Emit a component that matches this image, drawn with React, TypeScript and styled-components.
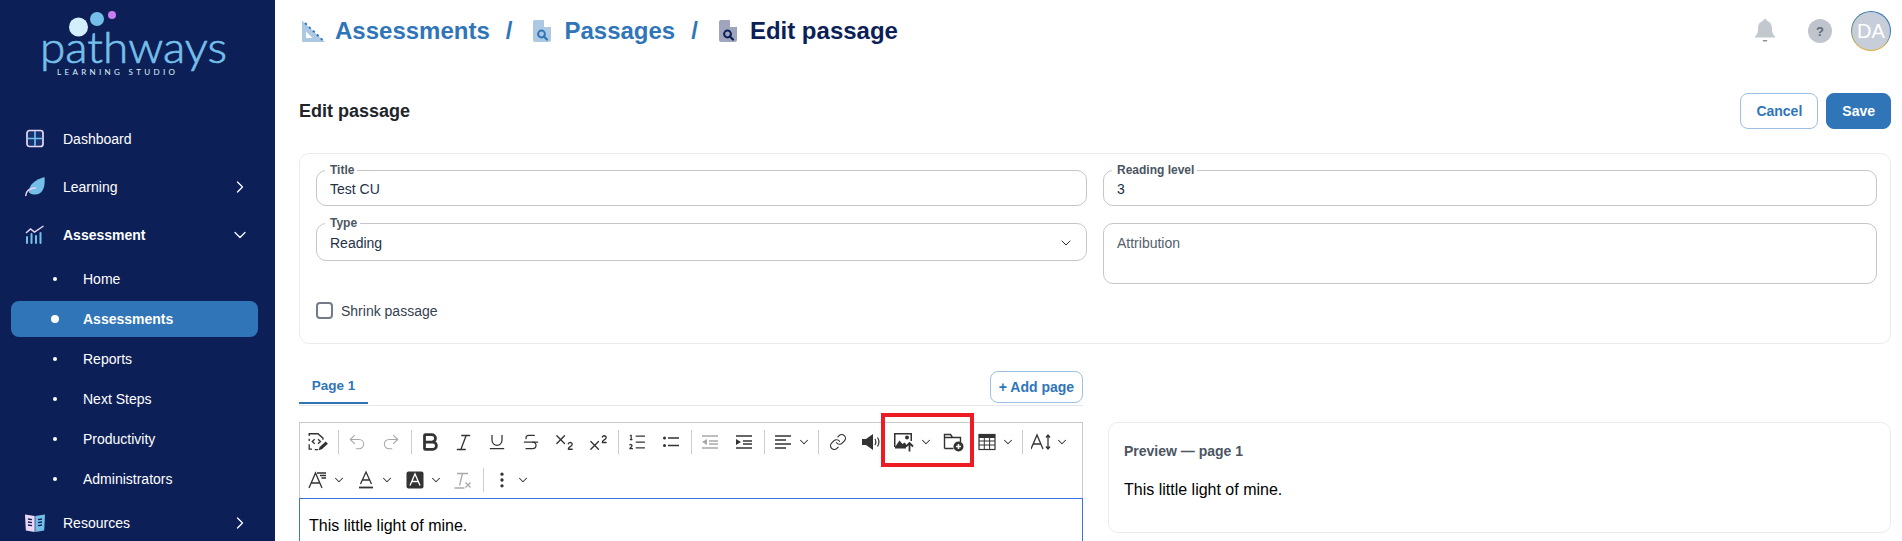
import React from "react";
import styled, { createGlobalStyle } from "styled-components";
import {
  Bold,
  ChevronDown,
  ChevronRight,
  EllipsisVertical,
  Italic,
  Link as LinkIcon,
  ListOrdered,
  Redo2,
  Strikethrough,
  Subscript,
  Superscript,
  Underline,
  Undo2,
} from "lucide-react";

const BLUE = "#2f75b8";
const NAVY = "#0d1f57";

const GlobalStyle = createGlobalStyle`
  html, body {
    margin: 0;
    height: 100%;
    overflow: hidden;
    background: #fff;
    font-family: "Liberation Sans", Arial, sans-serif;
  }
  * { box-sizing: border-box; }
`;

const Shell = styled.div`
  display: flex;
  height: 100vh;
  overflow: hidden;
`;

const Sidebar = styled.aside`
  width: 275px;
  flex: none;
  background: ${NAVY};
  color: #fff;
  font-size: 14px;
`;

const LogoBox = styled.div`
  height: 115px;
  svg { display: block; }
`;

const NavRow = styled.div<{ $bold?: boolean }>`
  height: 48px;
  display: flex;
  align-items: center;
  gap: 18px;
  padding: 0 25px;
  font-weight: ${(p) => (p.$bold ? 700 : 400)};
  svg.caret { margin-left: auto; }
`;

const SubList = styled.div`
  display: flex;
  flex-direction: column;
  gap: 4px;
  margin: 2px 0;
`;

const SubItem = styled.div<{ $active?: boolean }>`
  height: 36px;
  margin: 0 17px 0 11px;
  padding-left: 40px;
  display: flex;
  align-items: center;
  gap: 24px;
  border-radius: 8px;
  background: ${(p) => (p.$active ? BLUE : "transparent")};
  font-weight: ${(p) => (p.$active ? 700 : 400)};
`;

const DotBox = styled.span`
  width: 8px;
  display: flex;
  justify-content: center;
`;

const Dot = styled.span<{ $active?: boolean }>`
  width: ${(p) => (p.$active ? 8 : 4)}px;
  height: ${(p) => (p.$active ? 8 : 4)}px;
  border-radius: 50%;
  background: #fff;
`;

const Main = styled.main`
  flex: 1;
  min-width: 0;
  padding: 0 11px 0 24px;
`;

const Header = styled.header`
  height: 62px;
  display: flex;
  align-items: center;
  justify-content: space-between;
`;

const Crumbs = styled.nav`
  display: flex;
  align-items: center;
  padding-left: 2px;
  font-size: 24px;
  font-weight: 700;
  color: ${BLUE};
`;

const Crumb = styled.span<{ $current?: boolean }>`
  display: flex;
  align-items: center;
  gap: 10px;
  color: ${(p) => (p.$current ? NAVY : BLUE)};
`;

const Slash = styled.span`
  margin: 0 18px 0 16px;
`;

const HeaderTools = styled.div`
  display: flex;
  align-items: center;
`;

const BellSlot = styled.span`
  display: flex;
  margin-right: 32px;
`;

const HelpDot = styled.span`
  width: 24px;
  height: 24px;
  border-radius: 50%;
  background: #c0c5cd;
  color: #5f6878;
  font-size: 13px;
  font-weight: 700;
  display: flex;
  align-items: center;
  justify-content: center;
  margin-right: 19px;
`;

const Avatar = styled.span`
  width: 40px;
  height: 40px;
  border-radius: 50%;
  padding: 1px;
  background: conic-gradient(#2f75b8 0 25%, #e0b24a 40% 60%, #6a9a7a 75%, #2f75b8 100%);
  display: flex;
`;

const AvatarFace = styled.span`
  flex: 1;
  border-radius: 50%;
  background: #c8ced9;
  color: #fff;
  font-size: 20px;
  display: flex;
  align-items: center;
  justify-content: center;
`;

const TitleRow = styled.div`
  margin-top: 31px;
  display: flex;
  align-items: center;
  justify-content: space-between;
`;

const PageTitle = styled.h1`
  margin: 0;
  font-size: 18px;
  font-weight: 700;
  color: #212529;
`;

const Actions = styled.div`
  display: flex;
  gap: 8px;
`;

const Button = styled.button<{ $primary?: boolean }>`
  height: 36px;
  padding: 0 15px;
  border-radius: 8px;
  border: 1px solid ${(p) => (p.$primary ? BLUE : "#9cc0e3")};
  background: ${(p) => (p.$primary ? BLUE : "#fff")};
  color: ${(p) => (p.$primary ? "#fff" : BLUE)};
  font: 700 14px "Liberation Sans", Arial, sans-serif;
`;

const Card = styled.section`
  margin-top: 24px;
  border: 1px solid #e9ecef;
  border-radius: 10px;
  padding: 9px 13px 24px 16px;
`;

const FormGrid = styled.div`
  display: grid;
  grid-template-columns: 771px 1fr;
  column-gap: 16px;
`;

const FieldStack = styled.div`
  display: flex;
  flex-direction: column;
  gap: 10px;
`;

const Field = styled.fieldset<{ $height: number }>`
  margin: 0;
  padding: 0 13px;
  min-width: 0;
  height: ${(p) => p.$height}px;
  border: 1px solid #c4c6c9;
  border-radius: 10px;
  font-size: 14px;
  color: #243047;
`;

const FieldLegend = styled.legend`
  margin-left: -5px;
  padding: 0 3px 0 5px;
  font-size: 12px;
  line-height: 14px;
  font-weight: 700;
  color: #4b5563;
`;

const FieldValue = styled.div<{ $line: number }>`
  display: flex;
  align-items: center;
  justify-content: space-between;
  height: ${(p) => p.$line}px;
  svg { margin-right: -1px; }
`;

const AreaField = styled.div`
  margin-top: 7px;
  height: 61px;
  border: 1px solid #c4c6c9;
  border-radius: 10px;
  padding: 11px 13px;
  font-size: 14px;
  color: #555d6b;
`;

const CheckRow = styled.label`
  margin-top: 18px;
  display: flex;
  align-items: center;
  gap: 8px;
  font-size: 14px;
  color: #374151;
`;

const CheckBox = styled.span`
  width: 17px;
  height: 17px;
  border: 2px solid #747b88;
  border-radius: 4px;
`;

const LowerGrid = styled.div`
  margin-top: 27px;
  display: grid;
  grid-template-columns: 784px 1fr;
  column-gap: 25px;
`;

const TabRow = styled.div`
  display: flex;
  justify-content: space-between;
  align-items: flex-end;
  height: 35px;
  padding-bottom: 2px;
  border-bottom: 1px solid #e5e7eb;
`;

const Tab = styled.div`
  width: 69px;
  height: 31px;
  margin-bottom: -1px;
  border-bottom: 2px solid ${BLUE};
  color: ${BLUE};
  font-size: 13.5px;
  font-weight: 700;
  text-align: center;
  line-height: 25px;
`;

const AddPage = styled.button`
  height: 32px;
  width: 93px;
  padding: 0;
  border: 1px solid #9cc0e3;
  border-radius: 8px;
  background: #fff;
  color: ${BLUE};
  font: 700 14px "Liberation Sans", Arial, sans-serif;
`;

const Editor = styled.div`
  position: relative;
  margin-top: 16px;
  border: 1px solid #c9c9c9;
  border-bottom: 0;
  height: 140px;
`;

const Toolbar = styled.div`
  padding: 2px 0 1px 1px;
  display: flex;
  flex-direction: column;
  gap: 4px;
`;

const ToolRow = styled.div`
  display: flex;
  align-items: center;
  height: 34px;
`;

const ToolButton = styled.span<{ $off?: boolean }>`
  width: 33.6px;
  height: 34px;
  flex: none;
  display: flex;
  align-items: center;
  justify-content: center;
  color: ${(p) => (p.$off ? "#a9a9a9" : "#333")};
`;

const SplitButton = styled.span<{ $off?: boolean }>`
  width: 48.5px;
  height: 34px;
  flex: none;
  display: flex;
  align-items: center;
  padding-left: 6.5px;
  gap: 4px;
  color: ${(p) => (p.$off ? "#a9a9a9" : "#333")};
`;

const ToolSep = styled.span`
  width: 1px;
  height: 24px;
  flex: none;
  margin: 0 1.75px 0 3px;
  background: #ccc;
`;

const RedMark = styled.div`
  position: absolute;
  left: 581px;
  top: -10px;
  width: 93px;
  height: 54px;
  border: 4px solid #ed1c24;
  pointer-events: none;
`;

const EditArea = styled.div`
  height: 100%;
  margin: 0 -1px;
  border: 1px solid #3d73e0;
  padding: 17px 9px;
  font-size: 16px;
  line-height: 20px;
  color: #000;
`;

const PreviewColumn = styled.div`
  padding-top: 51px;
`;

const Preview = styled.section`
  height: 111px;
  border: 1px solid #e9ecef;
  border-radius: 10px;
  padding: 20px 15px;
`;

const PreviewLabel = styled.div`
  font-size: 14px;
  line-height: 16px;
  font-weight: 700;
  color: #4b5563;
`;

const PreviewText = styled.div`
  margin-top: 21px;
  font-size: 16px;
  line-height: 20px;
  color: #000;
`;

const PINK = "#ead6f5";
const SKY = "#74bfe9";

const Logo = () => (
  <svg width="275" height="115" viewBox="0 0 275 115">
    <circle cx="78.5" cy="27" r="9.5" fill="#d4effc" />
    <circle cx="97" cy="19" r="7" fill={SKY} />
    <circle cx="112" cy="15" r="4" fill="#c77df0" />
    <text
      x="40"
      y="63"
      textLength="187"
      lengthAdjust="spacingAndGlyphs"
      fontFamily="Lato, sans-serif"
      fontWeight="300"
      fontSize="43"
      fill={SKY}
      stroke={SKY}
      strokeWidth=".7"
    >
      pathways
    </text>
    <text
      x="57"
      y="75"
      textLength="118"
      fontFamily="Lato, sans-serif"
      fontSize="8"
      fill="#dff3fd"
    >
      LEARNING STUDIO
    </text>
  </svg>
);

const DashboardIcon = () => (
  <svg width="20" height="20" viewBox="0 0 20 20">
    <rect x="2" y="1.500" width="16" height="16" rx="2.500" fill="#17336f" stroke={PINK} strokeWidth="1.700" />
    <path d="M10 2v15M2.500 9.500h15" stroke={SKY} strokeWidth="1.700" />
  </svg>
);

const LeafIcon = () => (
  <svg width="20" height="20" viewBox="0 0 20 20">
    <path d="M19.500 0c1 9.500-1.500 17.500-9.500 17.500-2.500 0-4.500-.5-6-2C3.500 8.500 9 3 19.500 0z" fill={SKY} />
    <path d="M0.800 18.500C1.500 13 5 11 10.500 11" fill="none" stroke={PINK} strokeWidth="1.500" strokeLinecap="round" />
  </svg>
);

const ChartIcon = () => (
  <svg width="20" height="20" viewBox="0 0 20 20">
    <path d="M1 8l4.500-4 4 3L18.500 1" fill="none" stroke={PINK} strokeWidth="1.500" />
    <path d="M2 12v6M6.500 9v9M11 11v7M15.500 8v10" stroke={SKY} strokeWidth="2" strokeLinecap="round" />
  </svg>
);

const BookIcon = () => (
  <svg width="20" height="20" viewBox="0 0 20 20">
    <path d="M0 1.500l9.700 1.500v16L0.800 17.500z" fill={PINK} />
    <path d="M20 1.500L10.300 3v16l8.900-1.500z" fill={SKY} />
    <path d="M3 6l4 .7M3 9l4 .7M3 12l4 .7M13 6.700l4-.7M13 9.700l4-.7M13 12.700l4-.7" stroke={NAVY} strokeWidth="1.300" />
  </svg>
);

const RulerIcon = ({ color }: { color: string }) => (
  <svg width="24" height="24" viewBox="0 0 24 24">
    <path d="M1 1.500L24 23H2a1 1 0 0 1-1-1z" fill={color} opacity=".4" />
    <path d="M4 4l17.500 17" stroke={color} strokeWidth="1.800" strokeDasharray="2.500 3" />
    <path d="M5 12.500L11.500 19H5z" fill="#fff" />
  </svg>
);

const FileSearchIcon = ({ color }: { color: string }) => (
  <svg width="24" height="24" viewBox="0 0 24 24">
    <path d="M4.500 1h9L21 8v13a2 2 0 0 1-2 2H5a2 2 0 0 1-2-2V3a2 2 0 0 1 1.500-2z" fill={color} opacity=".4" />
    <path d="M14 .8L21.200 8H14z" fill="#fff" />
    <circle cx="11.500" cy="15" r="3.400" fill="none" stroke={color} strokeWidth="2" />
    <path d="M14 17.500l3 3" stroke={color} strokeWidth="2.200" strokeLinecap="round" />
  </svg>
);

const BellIcon = () => (
  <svg width="22" height="26" viewBox="0 0 22 26">
    <path d="M11 1a2 2 0 0 1 2 2c4 1 5 4.500 5 8 0 4 1 5.500 3 7.500v1H1v-1c2-2 3-3.500 3-7.500 0-3.500 1-7 5-8a2 2 0 0 1 2-2z" fill="#c3c8cf" />
    <path d="M8.500 22h5l-1 1.500h-3z" fill="#8a909a" />
  </svg>
);

const SourceIcon = () => (
  <svg width="22" height="22" viewBox="0 0 20 20" fill="none" stroke="currentColor" strokeWidth="1.200">
    <path d="M2 4.500V2.500h8l4.500 4v1.500M2 7v2M2 12v4.500h2.500M7 17h3" />
    <path d="M7 7.500L4.800 9.500 7 11.500M10 7.500l2.200 2-2.200 2" />
    <path d="M10.500 17.500l1-3 5.500-5 2 2-5.500 5z" fill="currentColor" stroke="none" />
  </svg>
);

const BulletsIcon = () => (
  <svg width="20" height="20" viewBox="0 0 20 20" fill="currentColor">
    <circle cx="3.500" cy="6" r="1.500" />
    <circle cx="3.500" cy="13.500" r="1.500" />
    <path d="M7 5.300h11v1.400H7zM7 12.800h11v1.400H7z" />
  </svg>
);

const OutdentIcon = () => (
  <svg width="20" height="20" viewBox="0 0 20 20" fill="currentColor">
    <path d="M2 3.300h16v1.400H2zM9 8.300h9v1.400H9zM9 11.300h9v1.400H9zM2 15.300h16v1.400H2zM7 7v6l-5-3z" />
  </svg>
);

const IndentIcon = () => (
  <svg width="20" height="20" viewBox="0 0 20 20" fill="currentColor">
    <path d="M2 3.300h16v1.400H2zM9 8.300h9v1.400H9zM9 11.300h9v1.400H9zM2 15.300h16v1.400H2zM2 7v6l5-3z" />
  </svg>
);

const AlignIcon = () => (
  <svg width="20" height="20" viewBox="0 0 20 20" fill="currentColor">
    <path d="M2 3.300h16v1.400H2zM2 7.300h11v1.400H2zM2 11.300h16v1.400H2zM2 15.300h11v1.400H2z" />
  </svg>
);

const SpeakerIcon = () => (
  <svg width="20" height="20" viewBox="0 0 20 20" fill="currentColor">
    <path d="M1 7h4l7-5v16l-7-5H1z" />
    <path d="M14 7c1 1.800 1 4.200 0 6M16.500 5.500c1.800 2.800 1.800 6.200 0 9" fill="none" stroke="currentColor" strokeWidth="1.200" />
  </svg>
);

const ImageUploadIcon = () => (
  <svg width="21" height="20" viewBox="0 0 21 20" fill="currentColor">
    <path d="M0 1h18v8h-1.500V2.500h-15V15H0z" />
    <circle cx="13" cy="5.500" r="2" />
    <path d="M1 15l4.500-6.500 3 3.500 2-1.500 1.500 1.500V16.500H1z" />
    <path d="M15.500 19.500v-8M12 14.500l3.500-3.500 3.500 3.500" fill="none" stroke="currentColor" strokeWidth="1.800" />
  </svg>
);

const FolderPlusIcon = () => (
  <svg width="21" height="20" viewBox="0 0 21 20">
    <path d="M1.500 16.500V2.500h6l2 3H17.500v5M1.500 5.500h8M1.500 16.500h9" fill="none" stroke="currentColor" strokeWidth="1.400" />
    <circle cx="15.500" cy="14.500" r="5" fill="currentColor" />
    <path d="M15.500 12v5M13 14.500h5" stroke="#fff" strokeWidth="1.500" />
  </svg>
);

const TableIcon = () => (
  <svg width="20" height="20" viewBox="0 0 20 20" fill="none" stroke="currentColor">
    <rect x="2" y="2.500" width="16" height="15" strokeWidth="1.200" />
    <path d="M2 4.500h16" strokeWidth="3" />
    <path d="M7.300 5v12M12.600 5v12M2 9h16M2 13h16" strokeWidth="1" />
  </svg>
);

const LineHeightIcon = () => (
  <svg width="20" height="20" viewBox="0 0 20 20" fill="none" stroke="currentColor" strokeWidth="1.300">
    <path d="M0 17L6 3l6 14M2.300 12h7.400" />
    <path d="M17 3v14M15 5.500L17 3l2 2.500M15 14.500l2 2.500 2-2.500" />
  </svg>
);

const FontStyleIcon = () => (
  <svg width="20" height="20" viewBox="0 0 20 20" fill="none" stroke="currentColor" strokeWidth="1.300">
    <path d="M1 18L7.500 3 14 18M3.500 13h8" />
    <path d="M9 3h9M12 5.500h6M13.500 8h4.500" />
  </svg>
);

const FontColorIcon = () => (
  <svg width="20" height="20" viewBox="0 0 20 20" fill="none" stroke="currentColor" strokeWidth="1.300">
    <path d="M4.500 14L10 2l5.500 12M6.500 10h7" />
    <path d="M3 17.500h14" strokeWidth="1.800" />
  </svg>
);

const FontBackIcon = () => (
  <svg width="20" height="20" viewBox="0 0 20 20">
    <rect x="1.500" y="1.500" width="17" height="17" rx="2" fill="currentColor" />
    <path d="M5 15.500L10 4l5 11.500M6.800 11.500h6.400" fill="none" stroke="#fff" strokeWidth="1.300" />
  </svg>
);

const ClearFormatIcon = () => (
  <svg width="20" height="20" viewBox="0 0 20 20" fill="none" stroke="currentColor" strokeWidth="1.300">
    <path d="M4 3.500h11M9.500 3.500L6.500 15.500M1.500 18h10" />
    <path d="M12.500 12.500l5 5M17.500 12.500l-5 5" />
  </svg>
);

const Caret = () => <ChevronDown size={14} strokeWidth={1.8} />;

const App = () => {
  return (
    <Shell>
      <GlobalStyle />
      <Sidebar>
        <LogoBox>
          <Logo />
        </LogoBox>
        <NavRow>
          <DashboardIcon />
          Dashboard
        </NavRow>
        <NavRow>
          <LeafIcon />
          Learning
          <ChevronRight className="caret" size={20} strokeWidth={1.5} />
        </NavRow>
        <NavRow $bold>
          <ChartIcon />
          Assessment
          <ChevronDown className="caret" size={20} strokeWidth={1.5} />
        </NavRow>
        <SubList>
          {["Home", "Assessments", "Reports", "Next Steps", "Productivity", "Administrators"].map((label) => (
            <SubItem key={label} $active={label === "Assessments"}>
              <DotBox>
                <Dot $active={label === "Assessments"} />
              </DotBox>
              {label}
            </SubItem>
          ))}
        </SubList>
        <NavRow>
          <BookIcon />
          Resources
          <ChevronRight className="caret" size={20} strokeWidth={1.5} />
        </NavRow>
      </Sidebar>
      <Main>
        <Header>
          <Crumbs>
            <Crumb>
              <RulerIcon color={BLUE} />
              Assessments
            </Crumb>
            <Slash>/</Slash>
            <Crumb>
              <FileSearchIcon color={BLUE} />
              Passages
            </Crumb>
            <Slash>/</Slash>
            <Crumb $current>
              <FileSearchIcon color={NAVY} />
              Edit passage
            </Crumb>
          </Crumbs>
          <HeaderTools>
            <BellSlot>
              <BellIcon />
            </BellSlot>
            <HelpDot>?</HelpDot>
            <Avatar>
              <AvatarFace>DA</AvatarFace>
            </Avatar>
          </HeaderTools>
        </Header>
        <TitleRow>
          <PageTitle>Edit passage</PageTitle>
          <Actions>
            <Button>Cancel</Button>
            <Button $primary>Save</Button>
          </Actions>
        </TitleRow>
        <Card>
          <FormGrid>
            <FieldStack>
              <Field $height={43}>
                <FieldLegend>Title</FieldLegend>
                <FieldValue $line={24}>Test CU</FieldValue>
              </Field>
              <Field $height={45}>
                <FieldLegend>Type</FieldLegend>
                <FieldValue $line={26}>
                  Reading
                  <ChevronDown size={16} strokeWidth={1.5} />
                </FieldValue>
              </Field>
            </FieldStack>
            <FieldStack>
              <Field $height={43}>
                <FieldLegend>Reading level</FieldLegend>
                <FieldValue $line={24}>3</FieldValue>
              </Field>
              <AreaField>Attribution</AreaField>
            </FieldStack>
          </FormGrid>
          <CheckRow>
            <CheckBox />
            Shrink passage
          </CheckRow>
        </Card>
        <LowerGrid>
          <div>
            <TabRow>
              <Tab>Page 1</Tab>
              <AddPage>+ Add page</AddPage>
            </TabRow>
            <Editor>
              <Toolbar>
                <ToolRow>
                  <ToolButton><SourceIcon /></ToolButton>
                  <ToolSep />
                  <ToolButton $off><Undo2 size={20} strokeWidth={1.3} /></ToolButton>
                  <ToolButton $off><Redo2 size={20} strokeWidth={1.3} /></ToolButton>
                  <ToolSep />
                  <ToolButton><Bold size={22} strokeWidth={3} /></ToolButton>
                  <ToolButton><Italic size={21} strokeWidth={1.5} /></ToolButton>
                  <ToolButton><Underline size={20} strokeWidth={1.5} /></ToolButton>
                  <ToolButton><Strikethrough size={20} strokeWidth={1.5} /></ToolButton>
                  <ToolButton><Subscript size={23} strokeWidth={1.4} /></ToolButton>
                  <ToolButton><Superscript size={23} strokeWidth={1.4} /></ToolButton>
                  <ToolSep />
                  <ToolButton><ListOrdered size={20} strokeWidth={1.5} /></ToolButton>
                  <ToolButton><BulletsIcon /></ToolButton>
                  <ToolSep />
                  <ToolButton $off><OutdentIcon /></ToolButton>
                  <ToolButton><IndentIcon /></ToolButton>
                  <ToolSep />
                  <SplitButton><AlignIcon /><Caret /></SplitButton>
                  <ToolSep />
                  <ToolButton><LinkIcon size={18} strokeWidth={1.6} /></ToolButton>
                  <ToolButton><SpeakerIcon /></ToolButton>
                  <SplitButton><ImageUploadIcon /><Caret /></SplitButton>
                  <ToolButton><FolderPlusIcon /></ToolButton>
                  <SplitButton><TableIcon /><Caret /></SplitButton>
                  <ToolSep />
                  <SplitButton><LineHeightIcon /><Caret /></SplitButton>
                </ToolRow>
                <ToolRow>
                  <SplitButton><FontStyleIcon /><Caret /></SplitButton>
                  <SplitButton><FontColorIcon /><Caret /></SplitButton>
                  <SplitButton><FontBackIcon /><Caret /></SplitButton>
                  <ToolButton $off><ClearFormatIcon /></ToolButton>
                  <ToolSep />
                  <SplitButton><EllipsisVertical size={20} strokeWidth={2} /><Caret /></SplitButton>
                </ToolRow>
              </Toolbar>
              <RedMark />
              <EditArea>This little light of mine.</EditArea>
            </Editor>
          </div>
          <PreviewColumn>
            <Preview>
              <PreviewLabel>Preview — page 1</PreviewLabel>
              <PreviewText>This little light of mine.</PreviewText>
            </Preview>
          </PreviewColumn>
        </LowerGrid>
      </Main>
    </Shell>
  );
};

export default App;
